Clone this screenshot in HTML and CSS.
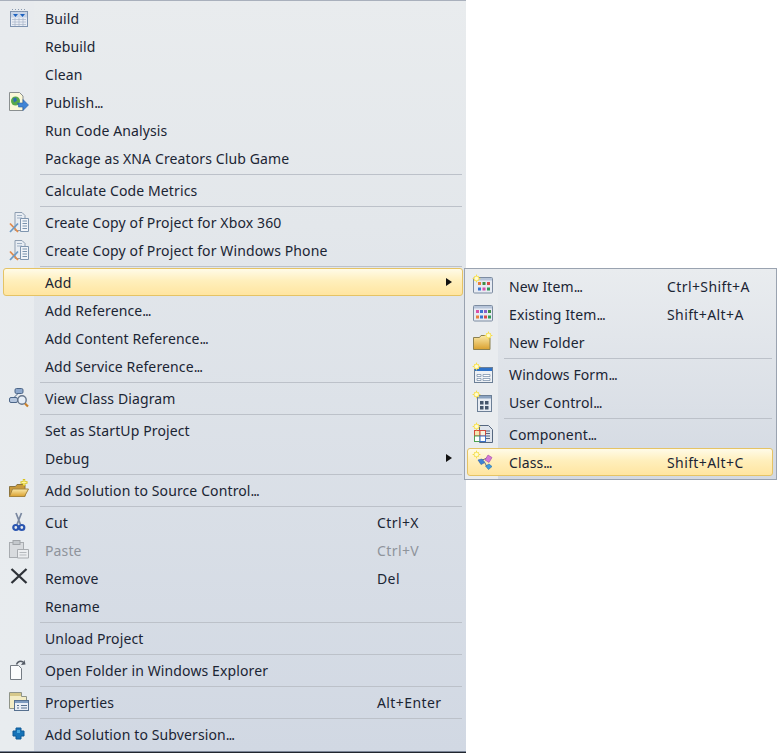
FILE: index.html
```html
<!DOCTYPE html>
<html>
<head>
<meta charset="utf-8">
<title>Project context menu</title>
<link rel="stylesheet" href="styles.css">
</head>
<body>
<svg class="defs" width="0" height="0">
  <defs>
    <linearGradient id="fold" x1="0" y1="0" x2="0" y2="1"><stop offset="0" stop-color="#fbe9a8"/><stop offset="1" stop-color="#d9a02e"/></linearGradient>
    <g id="spark"><path d="M4.500 0l1.200 3.300L9 4.500 5.700 5.700 4.500 9 3.300 5.700 0 4.500l3.300-1.200z" fill="#f5dc45"/><rect x="2" y="2" width="5" height="5" fill="#f7e46a"/><circle cx="4.500" cy="4.500" r="1.800" fill="#fffbd0"/></g>
    <g id="xfile"><path d="M6 .5h7l3 3v5H12v10H6z" fill="#e8edf3" stroke="#8d9db0"/><path d="M8 3.500h5M8 6h5" stroke="#9fb0c4"/><path d="M11.500 6.500h8v13h-8z" fill="#f1f4f8" stroke="#7f95ae"/><path d="M13.500 9h4.500M13.500 11.500h4.500M13.500 14h4.500M13.500 16.500h4.500" stroke="#7b93ad"/><path d="M1 11.500l8 8.500" stroke="#e08a4a" stroke-width="1.800"/><path d="M9 11.500l-8 8.500" stroke="#6d9ac4" stroke-width="1.800"/></g>
    <g id="grid"><rect x=".5" y="1.500" width="19" height="15.500" rx="1" fill="#e7ebf3" stroke="#7d8ca1"/><rect x="1" y="2" width="18" height="2.500" fill="#b7c5da"/></g>
  </defs>
</svg>
<div class="main menu">
  <div class="item"><span class="ico"><svg width="20" height="20" viewBox="0 0 20 20"><rect x="1.500" y="3.500" width="17" height="15" fill="#e9edf4" stroke="#7d92b0"/><rect x="2" y="4" width="16" height="5.500" fill="#c8d4e6"/><path d="M3.500 1v3M6.500 1v3M9.500 1v3M12.500 1v3M15.500 1v3" stroke="#8a9ab0" stroke-dasharray="1 1"/><path d="M3 11.500h14M3 14h14M3 16.500h14M6 10v8M10 10v8M14 10v8" stroke="#a9b6c9" stroke-width=".7"/><path d="M4 6l2.500 3L9 6zM11 6l2.500 3L16 6z" fill="#1d62c0"/></svg></span><span class="lbl">Build</span></div>
  <div class="item"><span class="ico"></span><span class="lbl">Rebuild</span></div>
  <div class="item"><span class="ico"></span><span class="lbl">Clean</span></div>
  <div class="item"><span class="ico"><svg width="20" height="20" viewBox="0 0 20 20"><path d="M.5 .5h10l3.500 3.500v14.500H.5z" fill="#fbf8d8" stroke="#8a8f90"/><circle cx="6.500" cy="9" r="4.500" fill="#58a84a"/><path d="M4 6.500l3-1 1 3-3 2zM8 10.500l2 1-1 2z" fill="#2b6db3"/><path d="M9.500 11h4.500V7.500l5.500 5.500-5.500 5.500V15H9.500z" fill="#3f84d6" stroke="#2a5fa5" stroke-width=".6"/></svg></span><span class="lbl">Publish<span class="dots">...</span></span></div>
  <div class="item"><span class="ico"></span><span class="lbl">Run Code Analysis</span></div>
  <div class="item"><span class="ico"></span><span class="lbl">Package as XNA Creators Club Game</span></div>
  <div class="sep"></div>
  <div class="item"><span class="ico"></span><span class="lbl">Calculate Code Metrics</span></div>
  <div class="sep"></div>
  <div class="item"><span class="ico"><svg width="20" height="20" viewBox="0 0 20 20"><use href="#xfile"/></svg></span><span class="lbl">Create Copy of Project for Xbox 360</span></div>
  <div class="item"><span class="ico"><svg width="20" height="20" viewBox="0 0 20 20"><use href="#xfile"/></svg></span><span class="lbl">Create Copy of Project for Windows Phone</span></div>
  <div class="sep"></div>
  <div class="item hot"><span class="ico"></span><span class="lbl">Add</span><span class="arrow"></span></div>
  <div class="item"><span class="ico"></span><span class="lbl">Add Reference<span class="dots">...</span></span></div>
  <div class="item"><span class="ico"></span><span class="lbl">Add Content Reference<span class="dots">...</span></span></div>
  <div class="item"><span class="ico"></span><span class="lbl">Add Service Reference<span class="dots">...</span></span></div>
  <div class="sep"></div>
  <div class="item"><span class="ico"><svg width="20" height="20" viewBox="0 0 20 20"><rect x="6" y="0.500" width="8" height="5" rx="1.500" fill="#8ea8cc" stroke="#4c6688"/><rect x=".5" y="9.500" width="8" height="5" rx="1.500" fill="#b5c6de" stroke="#4c6688"/><path d="M9 5.500L5 9.500" stroke="#4c6688"/><circle cx="13" cy="12" r="4.200" fill="#e6eef7" stroke="#66768c" stroke-width="1.400"/><path d="M16 15.500l3 3" stroke="#c8802c" stroke-width="2.200"/></svg></span><span class="lbl">View Class Diagram</span></div>
  <div class="sep"></div>
  <div class="item"><span class="ico"></span><span class="lbl">Set as StartUp Project</span></div>
  <div class="item"><span class="ico"></span><span class="lbl">Debug</span><span class="arrow"></span></div>
  <div class="sep"></div>
  <div class="item"><span class="ico"><svg width="20" height="20" viewBox="0 0 20 20"><path d="M.5 6.500h6l1.500-2h8v12H.5z" fill="#c99a3c" stroke="#8a7440"/><path d="M.5 16.500l3-7.500H19.500l-4 7.500z" fill="url(#fold)" stroke="#a5843e"/><path d="M15 -1v7M11.500 2.500h7" stroke="#d8c21e" stroke-width="2.400"/><path d="M15 0v5M12.500 2.500h5" stroke="#fff6a0"/></svg></span><span class="lbl">Add Solution to Source Control<span class="dots">...</span></span></div>
  <div class="sep"></div>
  <div class="item"><span class="ico"><svg width="20" height="20" viewBox="0 0 20 20"><path d="M7 1l4.500 11.500M12.500 1L8 12.500" stroke="#7a88a0" stroke-width="1.700"/><circle cx="6.800" cy="15.500" r="2.500" fill="none" stroke="#2a55b0" stroke-width="2.200"/><circle cx="12.800" cy="15.500" r="2.500" fill="none" stroke="#2a55b0" stroke-width="2.200"/></svg></span><span class="lbl">Cut</span><span class="key">Ctrl+X</span></div>
  <div class="item off"><span class="ico"><svg width="20" height="20" viewBox="0 0 20 20"><rect x=".5" y="2.500" width="14" height="15" fill="#d8dbde" stroke="#a8acb0"/><rect x="4" y=".5" width="7" height="4" fill="#c4c8cc" stroke="#a0a4a8"/><path d="M8.500 9.500h11v8.500h-11z" fill="#eceef0" stroke="#a8acb0"/><path d="M10.500 12.500h7M10.500 15h7" stroke="#b5b9bd"/></svg></span><span class="lbl">Paste</span><span class="key">Ctrl+V</span></div>
  <div class="item"><span class="ico"><svg width="20" height="20" viewBox="0 0 20 20"><path d="M2.500 1L17.500 15M17.500 1L2.500 15" stroke="#2e3238" stroke-width="2.300"/></svg></span><span class="lbl">Remove</span><span class="key">Del</span></div>
  <div class="item"><span class="ico"></span><span class="lbl">Rename</span></div>
  <div class="sep"></div>
  <div class="item"><span class="ico"></span><span class="lbl">Unload Project</span></div>
  <div class="sep"></div>
  <div class="item"><span class="ico"><svg width="20" height="20" viewBox="0 0 20 20"><path d="M1.500 5.500h8l3 3v11h-11z" fill="#fbfcfd" stroke="#757c84"/><path d="M7.500 4.500c1-3 4-4 6.500-2.500" fill="none" stroke="#555c66" stroke-width="1.500"/><path d="M12 5l4.500-.5-1-4.500z" fill="#555c66"/></svg></span><span class="lbl">Open Folder in Windows Explorer</span></div>
  <div class="sep"></div>
  <div class="item"><span class="ico"><svg width="20" height="20" viewBox="0 0 20 20"><path d="M.5 .5h12v4h5v12H.5z" fill="#f3ecc4" stroke="#8f9488"/><rect x="1" y="1" width="11" height="3" fill="#d6c88a"/><rect x="5.500" y="8.500" width="14" height="10" fill="#e9eef5" stroke="#56708f"/><rect x="6" y="9" width="13" height="2" fill="#7f9cc0"/><path d="M8 13.500h2M12 13.500h6M8 16h2M12 16h6" stroke="#56708f"/></svg></span><span class="lbl">Properties</span><span class="key">Alt+Enter</span></div>
  <div class="sep"></div>
  <div class="item"><span class="ico"><svg width="20" height="20" viewBox="0 0 20 20"><path d="M7 4h5v3h3v5h-3v3H7v-3H4V7h3z" fill="#1673b8" stroke="#0f5a96" stroke-linejoin="round"/><path d="M8 6h3v3H8z" fill="#4aa7dd"/></svg></span><span class="lbl">Add Solution to Subversion<span class="dots">...</span></span></div>
</div>
<div class="sub menu">
  <div class="item"><span class="ico"><svg width="20" height="20" viewBox="0 0 20 20"><use href="#grid"/><rect x="5" y="6" width="3" height="3" fill="#e8803a"/><rect x="9.500" y="6" width="3" height="3" fill="#3f8f46"/><rect x="14" y="6" width="3" height="3" fill="#d94a4a"/><rect x="5" y="11.500" width="3" height="3" fill="#3a74d0"/><rect x="9.500" y="11.500" width="3" height="3" fill="#d84fa8"/><rect x="14" y="11.500" width="3" height="3" fill="#2f9a55"/><use href="#spark" x="-1" y="-2"/></svg></span><span class="lbl">New Item<span class="dots">...</span></span><span class="key">Ctrl+Shift+A</span></div>
  <div class="item"><span class="ico"><svg width="20" height="20" viewBox="0 0 20 20"><use href="#grid"/><rect x="3" y="6" width="3" height="3" fill="#d84fa8"/><rect x="7" y="6" width="3" height="3" fill="#3a74d0"/><rect x="11" y="6" width="3" height="3" fill="#8a5fc8"/><rect x="15" y="6" width="3" height="3" fill="#3f8f46"/><rect x="3" y="11.500" width="3" height="3" fill="#e8803a"/><rect x="7" y="11.500" width="3" height="3" fill="#3a74d0"/><rect x="11" y="11.500" width="3" height="3" fill="#d94a4a"/><rect x="15" y="11.500" width="3" height="3" fill="#2f9a55"/></svg></span><span class="lbl">Existing Item<span class="dots">...</span></span><span class="key">Shift+Alt+A</span></div>
  <div class="item"><span class="ico"><svg width="20" height="20" viewBox="0 0 20 20"><path d="M.5 5.500h6l1.500-2h9v14H.5z" fill="url(#fold)" stroke="#8b8050"/><use href="#spark" x="11" y="-1"/></svg></span><span class="lbl">New Folder</span></div>
  <div class="sep"></div>
  <div class="item"><span class="ico"><svg width="20" height="20" viewBox="0 0 20 20"><rect x="1.500" y="3.500" width="18" height="15" fill="#eef1f5" stroke="#6c7f96"/><rect x="2" y="4" width="17" height="3" fill="#2f72c8"/><path d="M4 10.500h4v2H4zM4 14.500h4v2H4zM10 10.500h7v2h-7zM10 14.500h7v2h-7z" fill="#fff" stroke="#6f87a3" stroke-width=".7"/><use href="#spark" x="-1" y="-2"/></svg></span><span class="lbl">Windows Form<span class="dots">...</span></span></div>
  <div class="item"><span class="ico"><svg width="20" height="20" viewBox="0 0 20 20"><rect x="4.500" y="3.500" width="14" height="16" fill="#e7ecf3" stroke="#6c7f96"/><rect x="5" y="4" width="13" height="2.500" fill="#8aa2c0"/><path d="M7 9h3.500v3.500H7zM12 9h3.500v3.500H12zM7 14h3.500v3.500H7zM12 14h3.500v3.500H12z" fill="#45566c"/><use href="#spark" x="-1" y="-2"/></svg></span><span class="lbl">User Control<span class="dots">...</span></span></div>
  <div class="sep"></div>
  <div class="item"><span class="ico"><svg width="20" height="20" viewBox="0 0 20 20"><path d="M6.500 1.500h9l4 4v13h-13z" fill="#dfe4ec" stroke="#566880"/><path d="M13 7h4M13 9.500h4M13 12h4M13 14.500h4" stroke="#566880"/><rect x="1.500" y="6.500" width="5.500" height="5.500" fill="#f3e9b0" stroke="#d24a3c"/><rect x="7" y="6.500" width="5.500" height="5.500" fill="#f7f3dc" stroke="#d24a3c"/><rect x="1.500" y="12" width="5.500" height="5.500" fill="#fff" stroke="#4da24f"/><rect x="7" y="12" width="5.500" height="5.500" fill="#fff" stroke="#3a6fc4"/><use href="#spark" x="-1" y="-2"/></svg></span><span class="lbl">Component<span class="dots">...</span></span></div>
  <div class="item hot"><span class="ico"><svg width="20" height="20" viewBox="0 0 20 20"><path d="M7 9l7-3M12 11l2 4" stroke="#6d6e80"/><path d="M5 8l4-1 3 3.500-4 2z" fill="#3f82d6" stroke="#2b5fa5" stroke-width=".6"/><path d="M15 3l4 2.500-3 5-4-2.500z" fill="#d478d8" stroke="#9a4ca5" stroke-width=".6"/><path d="M12.500 14l3.500-2 3 2.500-3.500 3z" fill="#3f9ae0" stroke="#2b6fa5" stroke-width=".6"/><use href="#spark" x="-1" y="-2"/></svg></span><span class="lbl">Class<span class="dots">...</span></span><span class="key">Shift+Alt+C</span></div>
</div>
</body>
</html>
```
FILE: styles.css
```css
html, body { margin: 0; padding: 0; }
body {
  width: 778px;
  height: 753px;
  overflow: hidden;
  position: relative;
  background: #fff;
  font-family: "Noto Sans", "Open Sans", sans-serif;
  font-size: 14px;
  color: #1b2534;
}
.defs { position: absolute; }
.menu { box-sizing: border-box; }
.main {
  width: 466px;
  height: 752px;
  padding-top: 4px;
  border-top: 1px solid #a9b0bc;
  border-bottom: 1px solid #7a8496;
  background:
    linear-gradient(#e8ebee, #e8ecef) 0 0 / 34px 100% no-repeat,
    linear-gradient(#e9ecee 0%, #e3e7eb 30%, #d1d8e3 100%);
  box-shadow: 0 1px 0 #20252e;
}
.main > .item:first-child { margin-top: -1px; }
.sub {
  position: absolute;
  left: 464px;
  top: 268px;
  width: 313px;
  height: 212px;
  padding: 3px 3px 0 2px;
  border: 1px solid #9aa3b0;
  background:
    linear-gradient(#e9ecef, #e9ecef) 0 0 / 33px 100% no-repeat,
    linear-gradient(#e9ecef, #d3d9e2);
}
.item {
  display: flex;
  align-items: center;
  height: 28px;
  box-sizing: border-box;
  white-space: nowrap;
  margin: 0 3px;
  position: relative;
}
.sub .item { margin: 0; }
.ico {
  width: 42px;
  flex: none;
  display: flex;
  padding-left: 6px;
  box-sizing: border-box;
}
.ico svg { display: block; overflow: visible; }
.lbl { flex: none; letter-spacing: .12px; }
.dots { letter-spacing: -1px; }
.key { position: absolute; left: 374px; letter-spacing: .4px; }
.sub .key { left: 200px; }
.off { color: #8f949c; }
.sep {
  height: 1px;
  margin: 2px 4px 1px 40px;
  background: #bcc1c9;
}
.sub .sep { margin: 2px 1px 1px 37px; }
.hot {
  border: 1px solid #e5c365;
  border-radius: 3px;
  background: linear-gradient(#fffbe8 0%, #ffefbc 45%, #ffe5a0 100%);
}
.hot .ico { margin-left: -1px; }
.hot .key { left: 199px; }
.arrow {
  position: absolute;
  left: 443px;
  top: 10px;
  width: 0;
  height: 0;
  border-left: 6px solid #111;
  border-top: 4.5px solid transparent;
  border-bottom: 4.5px solid transparent;
}
.hot .arrow { left: 442px; top: 9px; }
```
